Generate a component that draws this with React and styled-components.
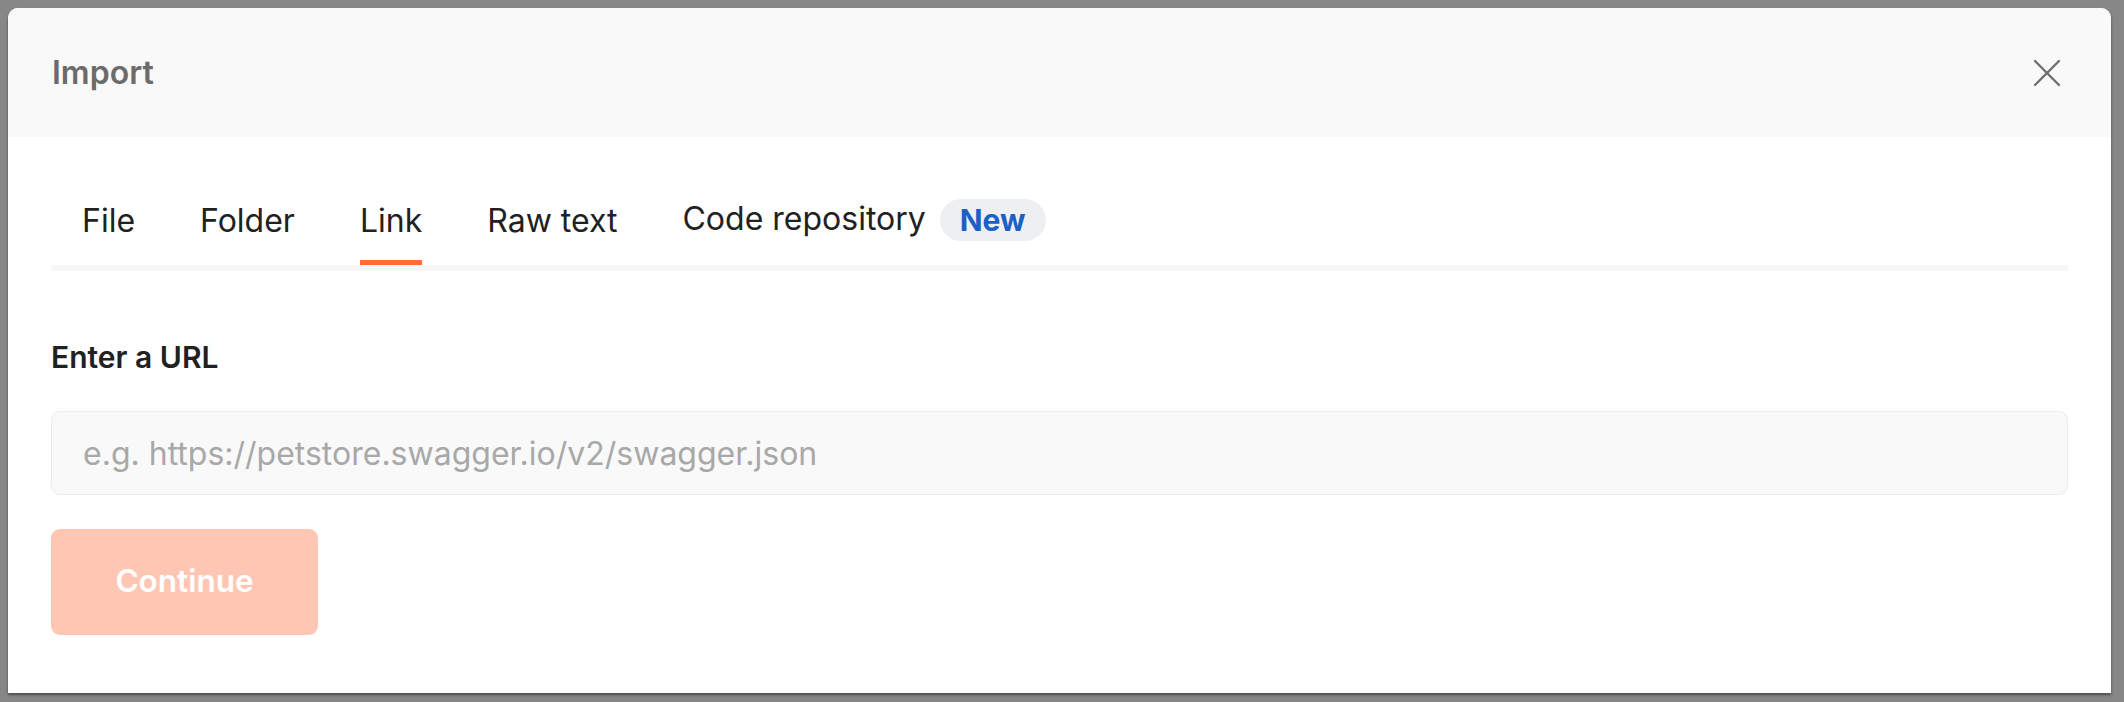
import React from 'react'
import styled, { createGlobalStyle } from 'styled-components'

const Global = createGlobalStyle`
  html, body {
    margin: 0;
    padding: 0;
    background: #878787;
  }
  body {
    font-family: Inter, "Noto Sans", "Liberation Sans", sans-serif;
  }
`

const Page = styled.div`
  width: 2124px;
  height: 702px;
  box-sizing: border-box;
  padding: 8px 13px 0 8px;
  overflow: hidden;
`

const Modal = styled.div`
  height: 685px;
  background: #fff;
  border-radius: 10px 10px 0 0;
  box-shadow: 0 2px 3px rgba(0, 0, 0, 0.45);
  display: flex;
  flex-direction: column;
  overflow: hidden;
`

const Header = styled.div`
  height: 129px;
  flex: none;
  background: #f9f9f9;
  display: flex;
  align-items: center;
  justify-content: space-between;
  padding: 0 50px 0 44px;
`

const Title = styled.div`
  font-size: 32px;
  font-weight: 600;
  color: #6b6b6b;
  line-height: 38px;
`

const Close = styled.button`
  width: 28px;
  height: 28px;
  padding: 0;
  border: none;
  background: none;
  color: #6f6f6f;
  display: flex;
  cursor: pointer;

  & svg {
    width: 28px;
    height: 28px;
  }
`

const Body = styled.div`
  padding: 61px 43px 0 43px;
`

const TabList = styled.div`
  display: flex;
  align-items: flex-end;
  gap: 65px;
  padding-left: 31px;
  border-bottom: 6px solid #f7f7f7;
`

const Tab = styled.div`
  display: flex;
  align-items: center;
  gap: 14px;
  font-size: 32px;
  line-height: 38px;
  color: #212121;
  padding-bottom: 20px;
  border-bottom: 5px solid ${p => (p.active ? '#ff6c37' : 'transparent')};
  cursor: pointer;
  white-space: nowrap;
`

const Badge = styled.span`
  height: 42px;
  padding: 0 20px;
  border-radius: 21px;
  background: #eeeff1;
  color: #1a60c6;
  font-size: 30px;
  font-weight: 700;
  display: inline-flex;
  align-items: center;
  transform: translateY(1px);
`

const Label = styled.div`
  margin-top: 67px;
  font-size: 30px;
  font-weight: 600;
  line-height: 38px;
  color: #212121;
`

const Input = styled.input`
  display: block;
  margin-top: 35px;
  width: 100%;
  height: 84px;
  box-sizing: border-box;
  padding: 0 31px;
  border: 1.5px solid #ececec;
  border-radius: 9px;
  background: #f9f9f9;
  font-family: inherit;
  font-size: 32px;
  color: #212121;
  outline: none;

  &::placeholder {
    color: #a8a8a8;
  }
`

const Button = styled.button`
  margin-top: 34px;
  width: 267px;
  height: 106px;
  padding: 0 0 3px;
  border: none;
  border-radius: 9px;
  background: #ffc7b3;
  color: #fff;
  font-family: inherit;
  font-size: 31.5px;
  font-weight: 600;
  cursor: not-allowed;
`

const tabs = ['File', 'Folder', 'Link', 'Raw text']

export default function App() {
  return (
    <Page>
      <Global />
      <Modal>
        <Header>
          <Title>Import</Title>
          <Close aria-label="Close">
            <svg viewBox="0 0 28 28" fill="none" stroke="currentColor" strokeWidth="2.4" strokeLinecap="round">
              <line x1="2" y1="2" x2="26" y2="26" />
              <line x1="26" y1="2" x2="2" y2="26" />
            </svg>
          </Close>
        </Header>
        <Body>
          <TabList>
            {tabs.map(name => (
              <Tab key={name} active={name === 'Link'}>
                {name}
              </Tab>
            ))}
            <Tab>
              Code repository
              <Badge>New</Badge>
            </Tab>
          </TabList>
          <Label>Enter a URL</Label>
          <Input placeholder="e.g. https://petstore.swagger.io/v2/swagger.json" />
          <Button disabled>Continue</Button>
        </Body>
      </Modal>
    </Page>
  )
}
